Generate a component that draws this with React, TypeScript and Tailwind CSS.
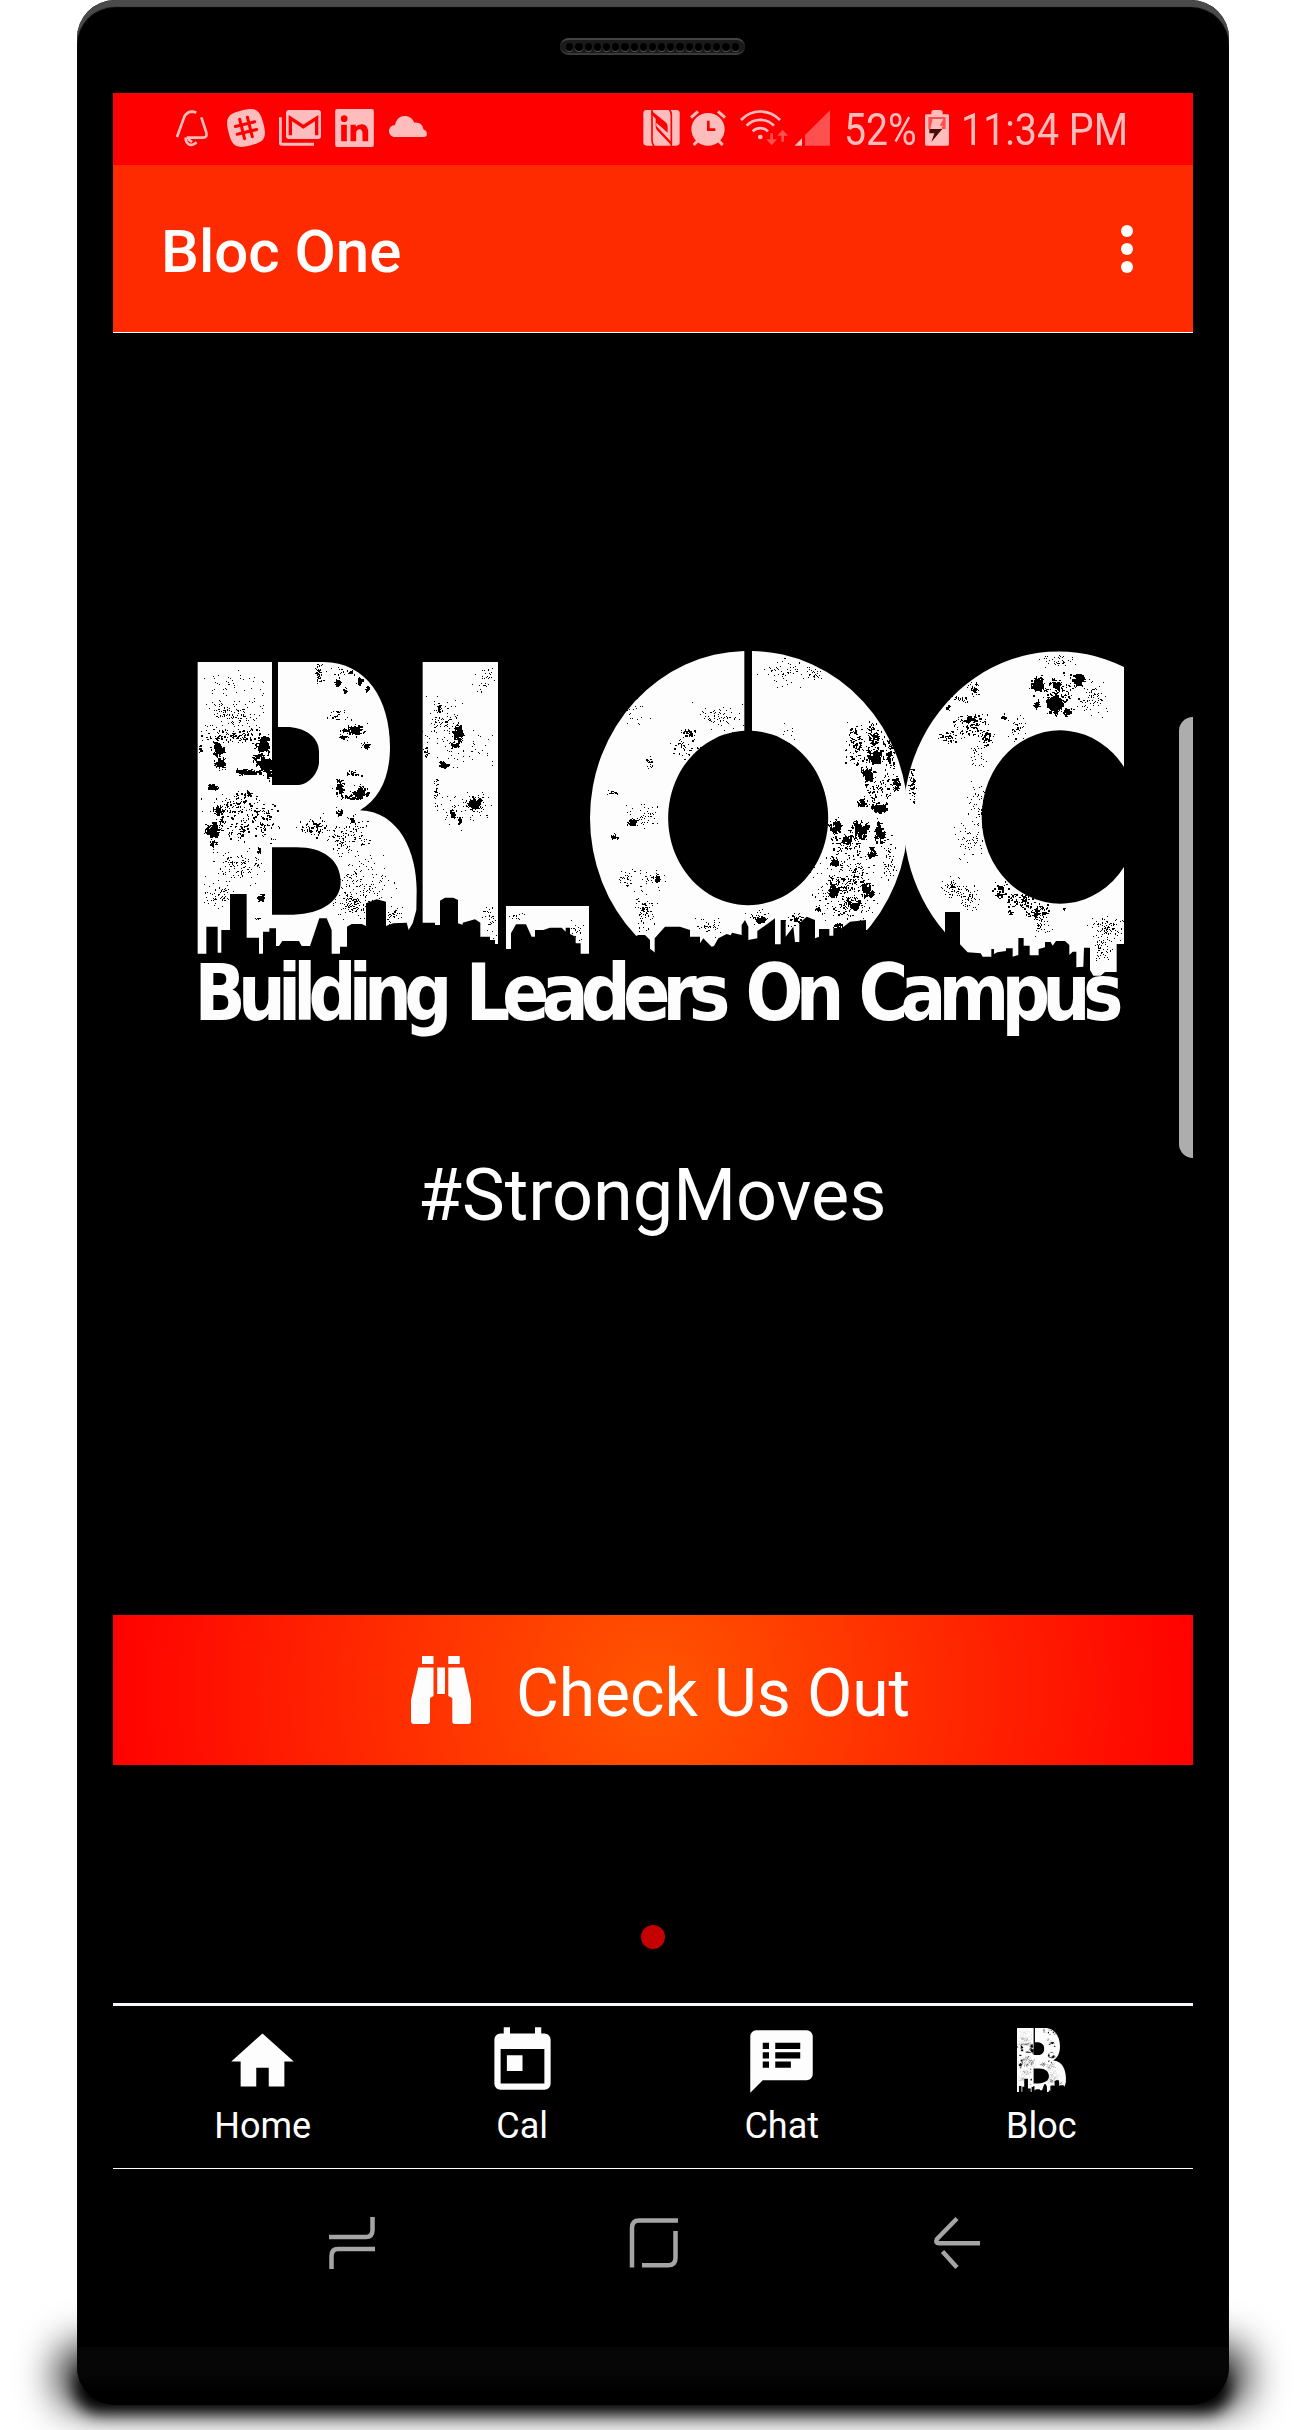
import React from "react";

type Cluster = [cx: number, cy: number, rx: number, ry: number, count: number, size: number];

/* Deterministic random source so that the grunge texture is stable. */
function makeRandom(seed: number) {
  let s = seed * 7919;
  return () => {
    s = (s + 0x6d2b79f5) | 0;
    let t = Math.imul(s ^ (s >>> 15), 1 | s);
    t = (t + Math.imul(t ^ (t >>> 7), 61 | t)) ^ t;
    return ((t ^ (t >>> 14)) >>> 0) / 4294967296;
  };
}

/* Builds a path of small square specks scattered around each cluster.
   Specks partly follow a few random sub-centres, which gives ragged blots. */
function specks(clusters: Cluster[], seed: number) {
  const rnd = makeRandom(seed);
  const bell = () => (rnd() + rnd() + rnd()) / 1.5 - 1;
  let d = "";
  for (const [cx, cy, rx, ry, count, size] of clusters) {
    const heavy = size > 8;
    const hubs = Array.from({ length: heavy ? 5 : 9 }, () => [bell() * 0.75, bell() * 0.75]);
    for (let i = 0; i < count; i++) {
      let u: number;
      let v: number;
      if (rnd() < (heavy ? 0.6 : 0.4)) {
        const hub = hubs[Math.floor(rnd() * hubs.length)];
        u = hub[0] + bell() * 0.35;
        v = hub[1] + bell() * 0.35;
      } else {
        u = heavy ? bell() : (rnd() * 2 - 1 + bell()) * 0.65;
        v = heavy ? bell() : (rnd() * 2 - 1 + bell()) * 0.65;
      }
      const r = Math.min(1, Math.hypot(u, v));
      const x = Math.round((cx + u * rx) / 3) * 3;
      const y = Math.round((cy + v * ry) / 3) * 3;
      const k = heavy ? 1 - r * 0.7 : 0.9;
      const w = Math.max(3, Math.round((rnd() * size * k) / 3) * 3);
      const h = Math.max(3, Math.round((rnd() * size * k) / 3) * 3);
      d += `M${x} ${y}h${w}v${h}h${-w}z`;
    }
  }
  return d;
}

const B_SPECKS = specks(
  [
    [165, 160, 110, 60, 40, 4],
    [160, 260, 105, 70, 160, 4],
    [165, 315, 105, 30, 120, 7],
    [112, 355, 30, 30, 110, 15],
    [120, 395, 28, 40, 70, 12],
    [245, 345, 42, 50, 130, 14],
    [248, 395, 45, 35, 140, 16],
    [205, 425, 75, 14, 110, 12],
    [260, 415, 20, 45, 80, 14],
    [98, 468, 30, 14, 50, 13],
    [60, 355, 8, 20, 15, 10],
    [180, 530, 110, 60, 130, 7],
    [250, 570, 60, 70, 80, 7],
    [205, 490, 18, 12, 22, 10],
    [112, 540, 26, 18, 40, 13],
    [98, 600, 38, 28, 130, 17],
    [98, 640, 18, 18, 25, 10],
    [125, 570, 10, 30, 30, 9],
    [175, 600, 50, 40, 50, 8],
    [236, 660, 8, 18, 26, 11],
    [175, 710, 100, 60, 120, 4],
    [110, 795, 60, 40, 70, 4],
    [240, 800, 20, 18, 55, 13],
    [230, 865, 14, 5, 6, 6],
    [415, 125, 15, 45, 45, 6],
    [470, 155, 12, 18, 40, 12],
    [537, 150, 14, 16, 45, 12],
    [560, 177, 8, 14, 24, 10],
    [493, 180, 9, 14, 20, 10],
    [490, 125, 45, 18, 30, 6],
    [475, 255, 35, 25, 25, 6],
    [520, 300, 54, 28, 100, 11],
    [490, 320, 22, 12, 30, 9],
    [528, 300, 18, 20, 35, 13],
    [555, 345, 24, 14, 40, 9],
    [515, 430, 32, 12, 30, 8],
    [475, 475, 28, 36, 80, 12],
    [540, 485, 42, 26, 110, 13],
    [515, 500, 60, 12, 50, 9],
    [478, 548, 14, 20, 36, 11],
    [515, 565, 18, 18, 24, 10],
    [400, 590, 52, 28, 70, 7],
    [500, 620, 75, 70, 120, 6],
    [540, 740, 110, 90, 120, 4],
    [520, 820, 70, 50, 140, 5],
    [640, 860, 50, 50, 50, 4],
  ],
  11,
);

const L_SPECKS = specks(
  [
    [920, 150, 50, 70, 35, 4],
    [790, 270, 65, 90, 100, 5],
    [775, 232, 8, 18, 22, 10],
    [832, 305, 25, 40, 110, 14],
    [822, 345, 26, 20, 50, 10],
    [738, 360, 10, 35, 24, 7],
    [790, 402, 24, 16, 60, 12],
    [850, 360, 100, 70, 50, 4],
    [768, 480, 9, 55, 30, 6],
    [880, 518, 28, 30, 120, 15],
    [885, 530, 55, 50, 50, 4],
    [815, 548, 10, 18, 36, 12],
    [837, 570, 8, 14, 22, 11],
    [820, 540, 55, 60, 35, 4],
    [930, 870, 35, 70, 35, 4],
    [1010, 860, 35, 20, 16, 4],
    [1190, 905, 30, 40, 20, 5],
  ],
  23,
);

const O_SPECKS = specks(
  [
    [680, 120, 90, 55, 65, 4],
    [760, 130, 30, 30, 25, 5],
    [690, 310, 25, 35, 10, 4],
    [225, 250, 60, 70, 20, 4],
    [480, 265, 80, 55, 70, 5],
    [385, 305, 28, 14, 40, 8],
    [375, 350, 50, 50, 40, 6],
    [265, 400, 18, 25, 22, 6],
    [155, 487, 20, 10, 14, 6],
    [215, 575, 22, 14, 65, 13],
    [250, 560, 75, 55, 50, 4],
    [162, 620, 20, 13, 34, 9],
    [200, 745, 45, 45, 36, 4],
    [290, 745, 12, 24, 34, 9],
    [270, 740, 55, 30, 30, 5],
    [255, 840, 42, 70, 80, 6],
    [440, 890, 55, 35, 40, 5],
    [600, 868, 26, 18, 60, 12],
    [600, 850, 60, 22, 24, 4],
    [710, 870, 40, 25, 50, 7],
    [885, 340, 35, 75, 90, 8],
    [940, 330, 45, 85, 130, 9],
    [940, 380, 45, 36, 120, 16],
    [922, 435, 28, 40, 110, 17],
    [990, 370, 25, 70, 70, 8],
    [1008, 460, 18, 40, 50, 12],
    [955, 470, 60, 60, 80, 8],
    [900, 515, 24, 16, 50, 13],
    [955, 530, 50, 26, 120, 15],
    [825, 585, 26, 30, 80, 13],
    [900, 600, 45, 40, 150, 16],
    [955, 610, 26, 60, 110, 14],
    [860, 630, 22, 22, 50, 12],
    [935, 665, 20, 26, 50, 13],
    [860, 650, 70, 70, 110, 7],
    [825, 695, 24, 20, 60, 12],
    [815, 778, 28, 30, 105, 16],
    [915, 775, 32, 40, 100, 14],
    [880, 820, 34, 28, 80, 14],
    [860, 780, 115, 110, 300, 6],
    [775, 835, 12, 12, 20, 11],
    [985, 690, 30, 90, 50, 6],
    [830, 885, 20, 14, 40, 12],
  ],
  37,
);

const C_SPECKS = specks(
  [
    [590, 90, 75, 25, 40, 4],
    [528, 160, 26, 30, 130, 17],
    [585, 160, 24, 20, 70, 14],
    [650, 147, 28, 26, 120, 17],
    [582, 220, 36, 44, 180, 18],
    [530, 222, 12, 18, 30, 12],
    [600, 185, 80, 55, 100, 8],
    [620, 245, 20, 16, 36, 12],
    [700, 200, 45, 70, 80, 4],
    [340, 175, 22, 28, 40, 7],
    [300, 205, 40, 14, 25, 7],
    [262, 232, 8, 12, 18, 10],
    [330, 285, 70, 45, 110, 7],
    [335, 265, 25, 18, 40, 9],
    [380, 320, 28, 40, 60, 8],
    [260, 320, 36, 26, 40, 8],
    [430, 262, 16, 8, 22, 9],
    [465, 290, 35, 45, 36, 6],
    [348, 375, 28, 45, 28, 4],
    [155, 460, 18, 60, 60, 7],
    [350, 530, 40, 90, 50, 4],
    [330, 630, 60, 70, 55, 4],
    [280, 770, 48, 40, 70, 4],
    [330, 800, 35, 50, 60, 5],
    [420, 780, 30, 35, 50, 7],
    [475, 810, 45, 28, 90, 7],
    [530, 845, 42, 30, 90, 8],
    [545, 890, 35, 45, 36, 5],
    [453, 846, 14, 10, 20, 9],
    [415, 793, 12, 8, 18, 9],
    [610, 834, 7, 4, 5, 6],
    [740, 900, 60, 50, 100, 4],
    [725, 950, 45, 50, 50, 4],
  ],
  53,
);

function LetterB() {
  return (
    <>
      <path
        fill="#fdfdfd"
        fillRule="evenodd"
        d="M53 96H276V465H355C390 463 417 425 417 395V365C417 318 370 291 320 291H294V96H430C560 96 630 210 630 350C630 440 600 505 540 541C660 545 710 670 710 780L709 840L698 880L686 900L680 878L640 880L618 888V815L590 808L558 820V888L545 882H515L501 890V950H480V971H455V900L440 865H418L390 948H365L357 933H307L297 948H288V895H268V905H249V971H237V923H200V792H150V900H124V968H113V890H79V971H53ZM276 652V854H340C430 852 482 810 482 757C482 690 430 652 350 652Z"
      />
      <path fill="#000" d={B_SPECKS} />
    </>
  );
}

function BlocLogo() {
  return (
    <svg className="block h-[372px] w-[932px]" viewBox="195 648 932 372" overflow="visible" aria-label="BLOC">
      <g transform="translate(180 630) scale(.33333)">
        <LetterB />
        <path
          fill="#fdfdfd"
          d="M728 96H954V942H945V930H930V920H901V878L885 868L848 878V884L834 880V810L820 803H795L780 812V885H765V878H728ZM978 828H1227V971H1202V940H1187V920L1170 912V893H1157V905L1145 893H1110L1090 900H1065V920H1055L1038 883H1008L993 910V957H978Z"
        />
        <path fill="#000" d={L_SPECKS} />
      </g>
      <g transform="translate(560 630) scale(.33333)">
        <path
          fill="#fdfdfd"
          fillRule="evenodd"
          d="M90 564A474 501 0 0 1 553 63V302A240 262 0 1 0 576 302V63A474 501 0 0 1 564 1065A474 501 0 0 1 90 564Z"
        />
        <path fill="#000" d={O_SPECKS} />
        <path
          fill="#000"
          d="M150 1090V922H220L235 915H255L270 930V971H284V925L315 890H360L390 900V920H420V940L430 925L440 935L455 950L462 948L475 925L500 912L512 916L516 908L545 915V885L555 870L565 890V930L592 925V903L625 880L645 865V943H662V870H677V920L700 890L705 936H718V880L740 860L765 870V925L777 920V897H808V917H820V895H845L870 875L918 870V900H1000V1090Z"
        />
      </g>
      <g transform="translate(860 630) scale(.33333)">
        <path fill="#fdfdfd" d="M792 111A466 501 0 1 0 792 1020V711A235 260 0 1 1 792 411Z" />
        <path fill="#000" d={C_SPECKS} />
        <path
          fill="#000"
          d="M60 1100V918H255V846H300V943L323 967L362 970L368 980H394V957H402V972L412 967L438 963V955H458V980L475 975V924H491V947H509V976H536V957L555 952V936H572L578 947L588 933H615L628 945V975L638 965H649V1012L670 1010L672 953H690V1020L700 1037H722L735 1026H770V942H800V1100Z"
        />
      </g>
      <g fill="#fdfdfd" fontFamily="DejaVu Sans, sans-serif" fontWeight="700" fontSize="78" letterSpacing="-9">
        <text x="194.5" y="1020" textLength="250" lengthAdjust="spacingAndGlyphs">Building</text>
        <text x="465.5" y="1020" textLength="257" lengthAdjust="spacingAndGlyphs">Leaders</text>
        <text x="745.5" y="1020" textLength="91" lengthAdjust="spacingAndGlyphs">On</text>
        <text x="858.5" y="1020" textLength="257" lengthAdjust="spacingAndGlyphs">Campus</text>
      </g>
    </svg>
  );
}

const PINK = "#ffbcbc";
const DIM = "#ff5050";

function StatusBar() {
  return (
    <div className="flex h-[72px] items-center bg-[#ff0000] pb-[2px] text-[45px] leading-none text-[#ffbcbc]">
      <svg className="ml-[63px] h-[38px] w-[32px] shrink-0" viewBox="48 57 96 114" fill="none" stroke={PINK} strokeWidth="8">
        <path d="M51 141L71 86C77 67 92 60 109 68M124 82L139 128C141 138 138 143 128 143H80M78 143C74 158 90 170 102 162L110 157M84 147L96 156" />
      </svg>
      <svg className="ml-[19px] h-[38px] w-[38px] shrink-0" viewBox="201 57 114 114">
        <g transform="rotate(-14 258 114)">
          <path fill={PINK} d="M258 60C302 60 312 70 312 114S302 168 258 168S204 158 204 114S214 60 258 60Z" />
          <path stroke="#f00" strokeWidth="9" strokeLinecap="round" d="M246 84V144M270 84V144M228 102H288M228 126H288" />
        </g>
      </svg>
      <svg className="ml-[14px] h-[38px] w-[42px] shrink-0" viewBox="357 57 126 114" fill="none">
        <path stroke={PINK} strokeWidth="9" d="M361 82V158Q361 163 366 163H462" />
        <rect x="378" y="60" width="105" height="87" rx="9" fill={PINK} />
        <path stroke="#f00" strokeWidth="10" d="M391 136V84L430 110L470 84V136" />
      </svg>
      <svg className="ml-[14px] h-[38px] w-[39px] shrink-0" viewBox="525 57 116 114">
        <rect x="525" y="57" width="116" height="114" rx="6" fill={PINK} />
        <g fill="#f00">
          <circle cx="552" cy="86" r="10" />
          <path d="M543 104H560V154H543ZM571 104H587V111C597 99 624 98 624 126V154H607V130C607 114 588 114 588 130V154H571Z" />
        </g>
      </svg>
      <svg className="ml-[15px] h-[38px] w-[38px] shrink-0" viewBox="687 57 114 114">
        <path
          fill={PINK}
          d="M706 141C694 141 687 133 687 123C687 113 695 106 705 105C708 88 720 78 734 78C748 78 758 86 763 98C780 96 789 106 790 118C798 121 801 127 801 132C801 138 797 141 791 141Z"
        />
      </svg>

      <svg className="ml-[216px] h-[38px] w-[37px] shrink-0" viewBox="39 57 111 114">
        <rect x="40" y="60" width="109" height="107" rx="10" fill={PINK} />
        <path fill="none" stroke="#f00" strokeWidth="5" d="M66 60V150Q66 162 72 168M124 168V76Q124 65 118 58" />
        <path fill="#f00" d="M64 62L106 96C112 101 113 106 113 114V128L79 98V108L126 158V168L84 124C79 118 77 114 77 108V86L64 72Z" />
      </svg>
      <svg className="ml-[10px] h-[38px] w-[36px] shrink-0" viewBox="180 57 108 114" fill="none" stroke={PINK}>
        <ellipse cx="234" cy="118" rx="50" ry="49" fill={PINK} stroke="none" />
        <path strokeWidth="9" d="M183 83L204 64M264 64L285 83M203 152L191 165M266 152L278 165" />
        <path stroke="#f00" strokeWidth="8" d="M235 92V119H256" />
      </svg>
      <svg className="ml-[14px] h-[38px] w-[48px] shrink-0" viewBox="330 57 144 114" fill="none">
        <circle cx="391" cy="141" r="7" fill={PINK} />
        <path stroke={PINK} strokeWidth="8" d="M333 90C365 56 417 56 450 90M350 107C372 84 410 84 432 107M368 124C380 111 402 111 414 124" />
        <path fill={DIM} d="M421 130H429V148H441L425 166L409 148H421ZM454 155H462V137H474L458 119L442 137H454Z" />
      </svg>
      <svg className="ml-[7px] h-[38px] w-[35px] shrink-0" viewBox="495 57 105 114">
        <path fill={PINK} d="M494 167L516 145V167Z" />
        <path fill={DIM} d="M525 167V135L600 61V167Z" />
      </svg>
      <span className="ml-[14px] mt-[2px] w-[81px] origin-left scale-x-[.87] whitespace-nowrap">52%</span>
      <svg className="h-[38px] w-[24px] shrink-0" viewBox="885 57 72 114">
        <path fill={PINK} d="M889 73H904V68Q904 60 912 60H930Q938 60 938 68V73H953Q957 73 957 77V163Q957 167 953 167H889Q885 167 885 163V77Q885 73 889 73Z" />
        <path fill={DIM} d="M895 81H947V117H895Z" />
        <path fill={PINK} d="M908 87H940L929 107H938L934 117H901Z" />
        <path fill="#4a0b0b" d="M898 117H937L904 156L913 130H898Z" />
      </svg>
      <span className="ml-[12px] mt-[2px] origin-left scale-x-[.875] whitespace-nowrap">11:34 PM</span>
    </div>
  );
}

function TabItem({ label, children }: { label: string; children: React.ReactNode }) {
  return (
    <div className="flex flex-1 flex-col items-center pt-[18px]">
      <div className="flex h-[75px] items-start justify-center">{children}</div>
      <span className="mt-[6px] text-[36px] leading-[42px]">{label}</span>
    </div>
  );
}

function MaterialIcon({ d }: { d: string }) {
  return (
    <svg className="h-[75px] w-[75px]" viewBox="0 0 24 24" fill="#fdfdfd">
      <path d={d} />
    </svg>
  );
}

function TabBar() {
  return (
    <div className="flex h-[166px] border-b border-t-[3px] border-b-white border-t-[#f8faff] pl-[20px] pr-[22px]">
      <TabItem label="Home">
        <MaterialIcon d="M10 20v-6h4v6h5v-8h3L12 3 2 12h3v8z" />
      </TabItem>
      <TabItem label="Cal">
        <MaterialIcon d="M19 3h-1V1h-2v2H8V1H6v2H5c-1.11 0-1.99.9-1.99 2L3 19c0 1.1.89 2 2 2h14c1.1 0 2-.9 2-2V5c0-1.1-.9-2-2-2zm0 16H5V8h14v11zM7 10h5v5H7z" />
      </TabItem>
      <TabItem label="Chat">
        <MaterialIcon d="M20 2H4c-1.1 0-1.99.9-1.99 2L2 22l4-4h14c1.1 0 2-.9 2-2V4c0-1.1-.9-2-2-2zM8 14H6v-2h2v2zm0-3H6V9h2v2zm0-3H6V6h2v2zm7 6h-5v-2h5v2zm3-3h-8V9h8v2zm0-3h-8V6h8v2z" />
      </TabItem>
      <TabItem label="Bloc">
        <svg className="mt-[4px] h-[64px] w-[49px]" viewBox="53 96 658 876" preserveAspectRatio="none">
          <LetterB />
        </svg>
      </TabItem>
    </div>
  );
}

function SystemNav() {
  return (
    <div className="flex h-[148px] items-center pl-[215px] [&>svg]:h-[54px] [&>svg]:shrink-0">
      <svg className="w-[48px]" viewBox="328 2216 48 54" fill="none" stroke="#a5a5a5" strokeWidth="4.5">
        <path d="M329 2237H366Q372.500 2237 372.500 2230V2217M375 2249H338Q331.500 2249 331.500 2256V2269" />
      </svg>
      <svg className="ml-[253px] w-[50px]" viewBox="629 2216 50 54" fill="none" stroke="#a5a5a5" strokeWidth="4.5">
        <path d="M678 2220.500H639Q632 2220.500 632 2228V2267.500M675.500 2231V2258Q675.500 2265.300 668 2265.300H642" />
      </svg>
      <svg className="ml-[254px] w-[48px]" viewBox="933 2216 48 54" fill="none" stroke="#a5a5a5" strokeWidth="4.500">
        <path d="M957 2218.500L937 2239Q935 2243.300 939 2243.300H980M942.500 2251.500L957 2267.500" />
      </svg>
    </div>
  );
}

function Speaker() {
  return (
    <div className="ml-[483px] flex h-[17px] w-[185px] items-center justify-center gap-[2px] rounded-full border-y-2 border-b-[#3a3a3a] border-t-[#454545] bg-[#1a1a1a]">
      {Array.from({ length: 19 }, (_, i) => (
        <span key={i} className="h-[8px] w-[7.200px] rounded-full bg-black shadow-[0_1px_0_#555]" />
      ))}
    </div>
  );
}

export default function App() {
  return (
    <div className="relative h-[2430px] w-[1305px] overflow-hidden bg-white" style={{ fontFamily: "Roboto, sans-serif" }}>
      {/* Ground shadow under the handset */}
      <div className="absolute left-[58px] top-[2345px] h-[62px] w-[1189px] rounded-[24px] bg-black/90 blur-[20px]" />
      <div className="absolute left-[75px] top-[2365px] h-[48px] w-[1155px] rounded-[30px] bg-black blur-[8px]" />

      <div className="relative ml-[77px] flex h-[2405px] w-[1152px] flex-col rounded-[38px] bg-black shadow-[inset_0_7px_1px_#4a4a4a]">
        <div className="h-[93px] pt-[38px]">
          <Speaker />
        </div>

        <div className="relative mx-auto flex w-[1080px] flex-col bg-black text-white">
          <StatusBar />
          <header className="flex h-[168px] items-center justify-between border-b border-white bg-[#ff2b00] pl-[48px] pr-[60px]">
            <h1 className="mt-[6px] text-[60px] font-medium leading-[70px]">Bloc One</h1>
            <div className="flex flex-col gap-[6px]">
              <span className="h-[12px] w-[12px] rounded-full bg-white" />
              <span className="h-[12px] w-[12px] rounded-full bg-white" />
              <span className="h-[12px] w-[12px] rounded-full bg-white" />
            </div>
          </header>

          <main className="flex h-[1670px] flex-col items-center">
            <div className="mt-[315px] self-start pl-[82px]">
              <BlocLogo />
            </div>
            <p className="mt-[134px] pr-[2px] text-[72px] leading-[84px]">#StrongMoves</p>
            <button className="mt-[377px] flex h-[150px] w-full items-center bg-[radial-gradient(circle_555px_at_center,#ff5500,#ff0000)] pl-[298px]">
              <svg className="h-[68px] w-[60px]" viewBox="411 1656 60 68" fill="#fdfdfd">
                <path d="M422 1656h11.500v8H422zM448.300 1656h11.500v8h-11.500zM437.200 1667.600h7.800v26.500h-7.800zM418.300 1667.600H433.500V1696L430 1698V1721Q430 1724 427 1724H414Q411 1724 411 1721V1700ZM448.300 1667.600H464L471 1700V1721Q471 1724 468 1724H455Q452.300 1724 452.300 1721V1698L448.300 1696Z" />
              </svg>
              <span className="ml-[45px] mt-[7px] text-[66px] leading-[78px] tracking-[-0.1px]">Check Us Out</span>
            </button>
            <span className="mt-[160px] h-[24px] w-[24px] rounded-full bg-[#c40000]" />
          </main>

          <TabBar />
          <SystemNav />

          {/* Edge panel handle */}
          <div className="absolute right-0 top-[624px] h-[441px] w-[14px] rounded-l-[14px] bg-[#adadad]" />
        </div>

        <div className="mt-[30px] flex-1 rounded-b-[38px] bg-linear-to-b from-[#060606] from-50% to-black" />
      </div>
    </div>
  );
}
